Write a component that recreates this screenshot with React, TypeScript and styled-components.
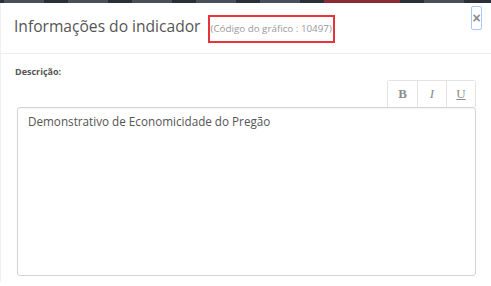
import styled, { createGlobalStyle } from "styled-components";

const GlobalStyle = createGlobalStyle`
  html, body {
    margin: 0;
    padding: 0;
    background: #ffffff;
  }
  body {
    font-family: "Open Sans", "Liberation Sans", sans-serif;
    color: #555555;
  }
`;

const Page = styled.div`
  width: 491px;
  height: 286px;
  overflow: hidden;
  background: #ffffff;
  display: flex;
  flex-direction: column;
`;

const NavStrip = styled.div`
  height: 3px;
  background: #2b3038;
  display: flex;
  align-items: center;
  gap: 24px;
  padding-left: 4px;
  overflow: hidden;
  flex-shrink: 0;
`;

const NavItem = styled.span<{ $active?: boolean }>`
  height: 3px;
  width: ${(p) => (p.$active ? "76px" : "40px")};
  background: ${(p) => (p.$active ? "#8a2b35" : "#4a505a")};
`;

const Modal = styled.div`
  flex: 1;
  display: flex;
  flex-direction: column;
  border-left: 1px solid #f0f0f0;
  margin-bottom: 4px;
`;

const Header = styled.div`
  height: 51px;
  box-sizing: border-box;
  border-bottom: 1px solid #eeeeee;
  display: flex;
  align-items: flex-start;
  padding: 5px 9px 0 13px;
`;

const Title = styled.h4`
  margin: 0;
  font-size: 15.6px;
  font-weight: 400;
  line-height: 24px;
  color: #555555;
  display: flex;
  align-items: center;
  flex: 1;
`;

const Code = styled.span`
  margin-left: 7px;
  margin-top: 7px;
  border: 2px solid #e8333a;
  font-size: 9.8px;
  line-height: 14px;
  color: #999999;
  padding: 5px 1px;
`;

const Close = styled.button`
  margin-top: -2px;
  width: 11px;
  height: 24px;
  padding: 0;
  border: 1px solid #a9c8f3;
  border-radius: 2px;
  background: transparent;
  color: #8a8a8a;
  font-family: "Liberation Sans", sans-serif;
  font-size: 14px;
  font-weight: 700;
  line-height: 20px;
  cursor: pointer;
`;

const Body = styled.div`
  flex: 1;
  display: flex;
  flex-direction: column;
  padding: 12px 15px 6px 16px;
`;

const Label = styled.label`
  font-size: 9px;
  font-weight: 700;
  color: #555555;
  line-height: 12px;
  margin-left: -2px;
`;

const Toolbar = styled.div`
  align-self: flex-end;
  margin-top: 2px;
  display: flex;
  border: 1px solid #e3e3e3;
  border-bottom: none;
  border-radius: 3px 3px 0 0;
`;

const ToolButton = styled.button<{ $italic?: boolean; $under?: boolean }>`
  width: 29px;
  height: 26px;
  padding: 0;
  border: none;
  border-left: 1px solid #e3e3e3;
  background: #ffffff;
  color: #8c8c8c;
  font-family: "Liberation Serif", "DejaVu Serif", serif;
  font-size: 13px;
  font-weight: ${(p) => (p.$italic || p.$under ? 400 : 700)};
  font-style: ${(p) => (p.$italic ? "italic" : "normal")};
  text-decoration: ${(p) => (p.$under ? "underline" : "none")};
  &:first-child {
    border-left: none;
  }
`;

const Editor = styled.div`
  flex: 1;
  box-sizing: border-box;
  border: 1px solid #d4d4d4;
  border-radius: 3px;
  box-shadow: inset 0 1px 1px rgba(0, 0, 0, 0.04);
  padding: 5px 10px;
  font-size: 11.7px;
  line-height: 17px;
  color: #555555;
`;

export default function App() {
  return (
    <Page>
      <GlobalStyle />
      <NavStrip>
        <NavItem />
        <NavItem />
        <NavItem />
        <NavItem />
        <NavItem />
        <NavItem $active />
        <NavItem />
      </NavStrip>
      <Modal>
        <Header>
          <Title>
            Informações do indicador
            <Code>(Código do gráfico : 10497)</Code>
          </Title>
          <Close aria-label="Fechar">×</Close>
        </Header>
        <Body>
          <Label>Descrição:</Label>
          <Toolbar>
            <ToolButton>B</ToolButton>
            <ToolButton $italic>I</ToolButton>
            <ToolButton $under>U</ToolButton>
          </Toolbar>
          <Editor>Demonstrativo de Economicidade do Pregão</Editor>
        </Body>
      </Modal>
    </Page>
  );
}
